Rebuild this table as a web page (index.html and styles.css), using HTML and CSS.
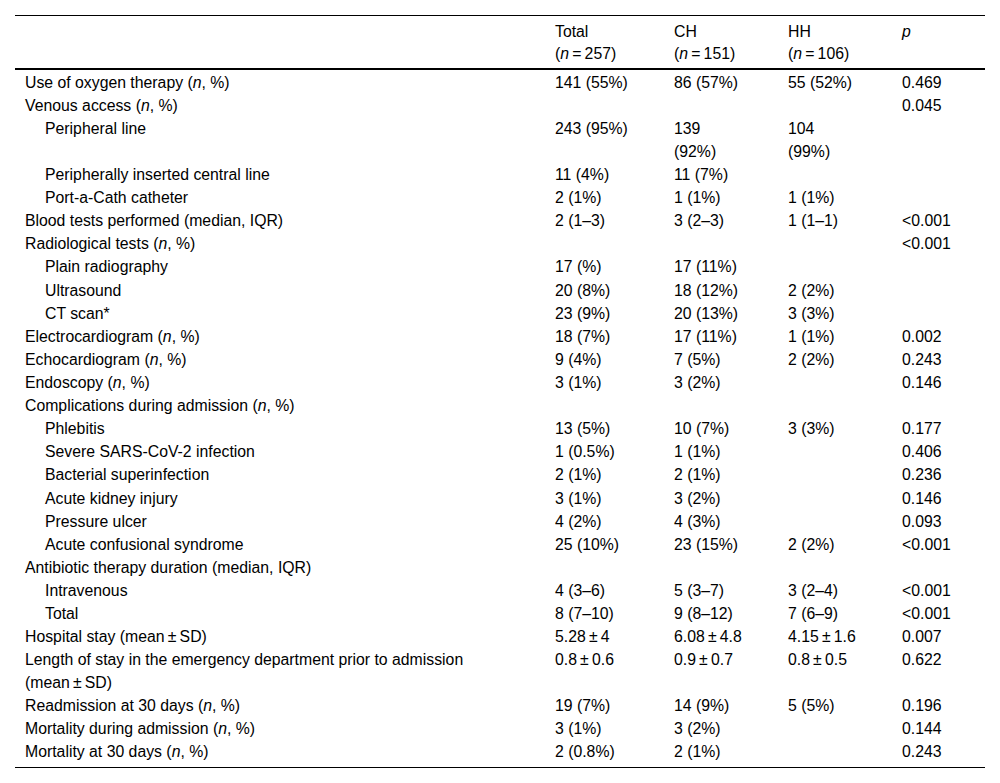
FILE: index.html
```html
<!DOCTYPE html>
<html lang="en">
<head>
<meta charset="utf-8">
<title>Table</title>
<link rel="stylesheet" href="styles.css">
</head>
<body>
<table class="data">
  <colgroup>
    <col class="c-label">
    <col class="c-total">
    <col class="c-ch">
    <col class="c-hh">
    <col class="c-p">
  </colgroup>
  <thead>
    <tr>
      <th></th>
      <th>Total<br>(<i>n</i>&#8201;=&#8201;257)</th>
      <th>CH<br>(<i>n</i>&#8201;=&#8201;151)</th>
      <th>HH<br>(<i>n</i>&#8201;=&#8201;106)</th>
      <th><i>p</i></th>
    </tr>
  </thead>
  <tbody>
    <tr><td>Use of oxygen therapy (<i>n</i>, %)</td><td>141 (55%)</td><td>86 (57%)</td><td>55 (52%)</td><td>0.469</td></tr>
    <tr><td>Venous access (<i>n</i>, %)</td><td></td><td></td><td></td><td>0.045</td></tr>
    <tr><td class="sub">Peripheral line</td><td>243 (95%)</td><td>139<br>(92%)</td><td>104<br>(99%)</td><td></td></tr>
    <tr><td class="sub">Peripherally inserted central line</td><td>11 (4%)</td><td>11 (7%)</td><td></td><td></td></tr>
    <tr><td class="sub">Port-a-Cath catheter</td><td>2 (1%)</td><td>1 (1%)</td><td>1 (1%)</td><td></td></tr>
    <tr><td>Blood tests performed (median, IQR)</td><td>2 (1&#8211;3)</td><td>3 (2&#8211;3)</td><td>1 (1&#8211;1)</td><td>&lt;0.001</td></tr>
    <tr><td>Radiological tests (<i>n</i>, %)</td><td></td><td></td><td></td><td>&lt;0.001</td></tr>
    <tr><td class="sub">Plain radiography</td><td>17 (%)</td><td>17 (11%)</td><td></td><td></td></tr>
    <tr><td class="sub">Ultrasound</td><td>20 (8%)</td><td>18 (12%)</td><td>2 (2%)</td><td></td></tr>
    <tr><td class="sub">CT scan*</td><td>23 (9%)</td><td>20 (13%)</td><td>3 (3%)</td><td></td></tr>
    <tr><td>Electrocardiogram (<i>n</i>, %)</td><td>18 (7%)</td><td>17 (11%)</td><td>1 (1%)</td><td>0.002</td></tr>
    <tr><td>Echocardiogram (<i>n</i>, %)</td><td>9 (4%)</td><td>7 (5%)</td><td>2 (2%)</td><td>0.243</td></tr>
    <tr><td>Endoscopy (<i>n</i>, %)</td><td>3 (1%)</td><td>3 (2%)</td><td></td><td>0.146</td></tr>
    <tr><td>Complications during admission (<i>n</i>, %)</td><td></td><td></td><td></td><td></td></tr>
    <tr><td class="sub">Phlebitis</td><td>13 (5%)</td><td>10 (7%)</td><td>3 (3%)</td><td>0.177</td></tr>
    <tr><td class="sub">Severe SARS-CoV-2 infection</td><td>1 (0.5%)</td><td>1 (1%)</td><td></td><td>0.406</td></tr>
    <tr><td class="sub">Bacterial superinfection</td><td>2 (1%)</td><td>2 (1%)</td><td></td><td>0.236</td></tr>
    <tr><td class="sub">Acute kidney injury</td><td>3 (1%)</td><td>3 (2%)</td><td></td><td>0.146</td></tr>
    <tr><td class="sub">Pressure ulcer</td><td>4 (2%)</td><td>4 (3%)</td><td></td><td>0.093</td></tr>
    <tr><td class="sub">Acute confusional syndrome</td><td>25 (10%)</td><td>23 (15%)</td><td>2 (2%)</td><td>&lt;0.001</td></tr>
    <tr><td>Antibiotic therapy duration (median, IQR)</td><td></td><td></td><td></td><td></td></tr>
    <tr><td class="sub">Intravenous</td><td>4 (3&#8211;6)</td><td>5 (3&#8211;7)</td><td>3 (2&#8211;4)</td><td>&lt;0.001</td></tr>
    <tr><td class="sub">Total</td><td>8 (7&#8211;10)</td><td>9 (8&#8211;12)</td><td>7 (6&#8211;9)</td><td>&lt;0.001</td></tr>
    <tr><td>Hospital stay (mean&#8201;&#177;&#8201;SD)</td><td>5.28&#8201;&#177;&#8201;4</td><td>6.08&#8201;&#177;&#8201;4.8</td><td>4.15&#8201;&#177;&#8201;1.6</td><td>0.007</td></tr>
    <tr><td>Length of stay in the emergency department prior to admission<br>(mean&#8201;&#177;&#8201;SD)</td><td>0.8&#8201;&#177;&#8201;0.6</td><td>0.9&#8201;&#177;&#8201;0.7</td><td>0.8&#8201;&#177;&#8201;0.5</td><td>0.622</td></tr>
    <tr><td>Readmission at 30 days (<i>n</i>, %)</td><td>19 (7%)</td><td>14 (9%)</td><td>5 (5%)</td><td>0.196</td></tr>
    <tr><td>Mortality during admission (<i>n</i>, %)</td><td>3 (1%)</td><td>3 (2%)</td><td></td><td>0.144</td></tr>
    <tr><td>Mortality at 30 days (<i>n</i>, %)</td><td>2 (0.8%)</td><td>2 (1%)</td><td></td><td>0.243</td></tr>
  </tbody>
</table>
</body>
</html>
```

FILE: styles.css
```css
html, body {
  margin: 0;
  padding: 0;
  background: #ffffff;
}

body {
  padding: 15px 15px 0 15px;
  font-family: "Liberation Sans", Arial, sans-serif;
  font-size: 15.8px;
  color: #000000;
}

.data {
  width: 970px;
  border-collapse: collapse;
  table-layout: fixed;
  line-height: 22.4px;
}

.c-label { width: 530px; }
.c-total { width: 119px; }
.c-ch { width: 114px; }
.c-hh { width: 114px; }
.c-p { width: 93px; }

.data thead tr {
  border-top: 1px solid #000;
  border-bottom: 2px solid #000;
}

.data th {
  font-weight: normal;
  text-align: left;
  vertical-align: top;
  padding: 5px 10px 2px 10px;
}

.data tbody tr:last-child {
  border-bottom: 1px solid #000;
}

.data td {
  text-align: left;
  vertical-align: top;
  padding: 0.45px 10px 0.28px 10px;
  white-space: nowrap;
}

.data tbody tr:first-child td {
  padding-top: 2.45px;
}

.data tbody tr:last-child td {
  padding-bottom: 3.3px;
}

.data td.sub {
  padding-left: 30px;
}

.data i {
  font-style: italic;
}
```
